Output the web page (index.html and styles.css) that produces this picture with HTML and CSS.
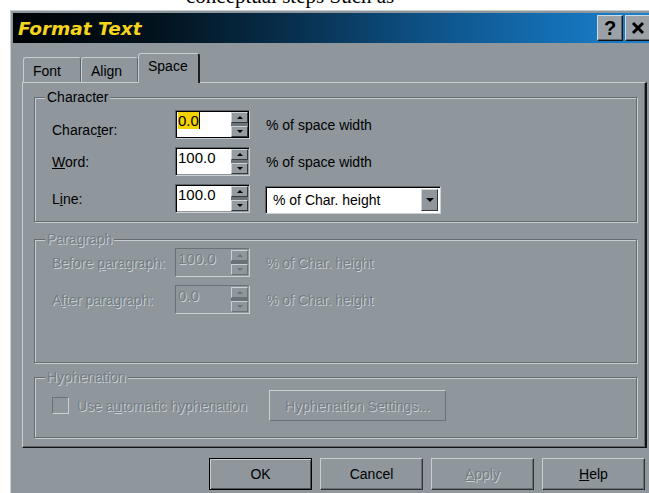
FILE: index.html
```html
<!DOCTYPE html>
<html>
<head>
<meta charset="utf-8">
<title>Format Text</title>
<link rel="stylesheet" href="styles.css">
</head>
<body>
<div class="page-text"><span class="page-line">conceptual steps Such as</span></div>

<div class="window">
  <div class="titlebar">
    <span class="title">Format Text</span>
    <div class="caption-btns">
      <span class="cap-btn">?</span>
      <span class="cap-btn">
        <svg width="14" height="14" viewBox="0 0 14 14"><path d="M2 2 L12 12 M12 2 L2 12" stroke="#000" stroke-width="3" fill="none"/></svg>
      </span>
    </div>
  </div>

  <div class="client">
    <div class="tabs">
      <div class="tab tab-font">Font</div>
      <div class="tab tab-align">Align</div>
      <div class="tab tab-space active">Space</div>
    </div>

    <div class="panel">
      <fieldset class="group group-char">
        <legend>Character</legend>
        <div class="rows">
          <div class="row">
            <label class="lbl lbl-low">Charac<u>t</u>er:</label>
            <div class="spin focus">
              <div class="field"><span class="sel">0.0</span></div>
              <div class="spinner"><span class="sb up"></span><span class="sb down"></span></div>
            </div>
            <span class="unit">% of space width</span>
          </div>
          <div class="row">
            <label class="lbl"><u>W</u>ord:</label>
            <div class="spin">
              <div class="field">100.0</div>
              <div class="spinner"><span class="sb up"></span><span class="sb down"></span></div>
            </div>
            <span class="unit">% of space width</span>
          </div>
          <div class="row">
            <label class="lbl">L<u>i</u>ne:</label>
            <div class="spin">
              <div class="field">100.0</div>
              <div class="spinner"><span class="sb up"></span><span class="sb down"></span></div>
            </div>
            <div class="combo">
              <span class="combo-text">% of Char. height</span>
              <span class="combo-btn"></span>
            </div>
          </div>
        </div>
      </fieldset>

      <fieldset class="group group-para disabled">
        <legend>Paragraph</legend>
        <div class="rows rows-para">
          <div class="row">
            <label class="lbl">Before <u>p</u>aragraph:</label>
            <div class="spin">
              <div class="field">100.0</div>
              <div class="spinner"><span class="sb up"></span><span class="sb down"></span></div>
            </div>
            <span class="unit">% of Char. height</span>
          </div>
          <div class="row">
            <label class="lbl">A<u>f</u>ter paragraph:</label>
            <div class="spin">
              <div class="field">0.0</div>
              <div class="spinner"><span class="sb up"></span><span class="sb down"></span></div>
            </div>
            <span class="unit">% of Char. height</span>
          </div>
        </div>
      </fieldset>

      <fieldset class="group group-hyph disabled">
        <legend>Hyphenation</legend>
        <div class="rows">
          <div class="hyph-row">
            <label class="check-label"><span class="checkbox"></span><span>Use a<u>u</u>tomatic hyphenation</span></label>
            <span class="btn btn-settings">Hyphenation Settings...</span>
          </div>
        </div>
      </fieldset>
    </div>

    <div class="actions">
      <span class="btn btn-default">OK</span>
      <span class="btn">Cancel</span>
      <span class="btn btn-disabled"><u>A</u>pply</span>
      <span class="btn"><u>H</u>elp</span>
    </div>
  </div>
</div>
</body>
</html>
```

FILE: styles.css
```css
* {
  box-sizing: border-box;
}

html,
body {
  margin: 0;
  padding: 0;
  width: 649px;
  height: 493px;
  overflow: hidden;
  background: #ffffff;
}

body {
  font-family: "Liberation Sans", Arial, sans-serif;
  font-size: 14px;
  color: #000;
}

/* document text running above the dialog; only its last line edge shows */
.page-text {
  height: 10px;
  overflow: hidden;
  font-family: "Liberation Serif", "Times New Roman", serif;
  font-size: 21px;
  line-height: 21px;
  padding-left: 186px;
}

.page-line {
  display: block;
  margin-top: -14px;
  white-space: nowrap;
}

/* dialog frame */
.window {
  width: 660px;
  height: 483px;
  margin-left: 10px;
  background: #8f979d;
  border-top: 1px solid #c6ced2;
  border-left: 1px solid #c6ced2;
  padding: 2px 0 0 2px;
}

.titlebar {
  width: 638px;
  height: 30px;
  display: flex;
  align-items: center;
  padding-left: 5px;
  background: linear-gradient(90deg, #000305 0%, #02121d 22%, #083150 45%, #0e5287 65%, #146fb4 85%, #1a82d0 100%);
}

.title {
  font-family: "DejaVu Sans", Verdana, sans-serif;
  font-weight: bold;
  font-style: italic;
  font-size: 18.5px;
  color: #f4d41c;
}

.caption-btns {
  margin-left: auto;
  display: flex;
  gap: 2px;
}

.cap-btn {
  width: 26px;
  height: 26px;
  display: flex;
  align-items: center;
  justify-content: center;
  background: #9aa2a7;
  border: 1px solid;
  border-color: #d2d9dc #111 #111 #d2d9dc;
  box-shadow: inset -1px -1px 0 #5e666b;
  font-family: "Liberation Sans", Arial, sans-serif;
  font-weight: bold;
  font-size: 20px;
  line-height: 1;
}

.client {
  width: 638px;
  padding: 10px 4px 0 9px;
}

/* property-sheet tabs */
.tabs {
  height: 29px;
  display: flex;
  align-items: flex-end;
  padding-left: 1px;
}

.tab {
  height: 25px;
  padding: 4px 0 0 9px;
  border: 1px solid;
  border-bottom: none;
  border-color: #c6ced2 #5e666b transparent #c6ced2;
  border-radius: 3px 3px 0 0;
  line-height: 18px;
}

.tab-font {
  width: 58px;
}

.tab-align {
  width: 57px;
}

.tab-space {
  width: 62px;
}

.tab.active {
  position: relative;
  z-index: 1;
  height: 30px;
  margin-bottom: -1px;
  padding-top: 3px;
  background: #8f979d;
  border-right: 2px solid #1a1e21;
}

.panel {
  height: 366px;
  border-top: 1px solid #c6ced2;
  border-left: 1px solid #c6ced2;
  border-right: 2px solid #111;
  border-bottom: 1px solid #111;
  box-shadow: inset -1px -1px 0 #5e666b;
  padding: 7px 8px 0 11px;
}

/* etched group boxes */
.group {
  margin: 0;
  min-inline-size: 0;
  padding: 0 0 0 10px;
  border: 1px solid #646c71;
  box-shadow: 1px 1px 0 #c6ced2, inset 1px 1px 0 #c6ced2;
}

.group legend {
  padding: 0 2px;
  line-height: 14px;
  height: 14px;
  background: #8f979d;
}

.group-char {
  height: 132px;
}

.group-para {
  height: 131px;
  margin-top: 10px;
}

.group-hyph {
  height: 68px;
  margin-top: 7px;
}

.rows {
  display: flex;
  flex-direction: column;
  gap: 8px;
  padding: 6px 0 0 7px;
}

.rows-para {
  padding-top: 2px;
}

.row {
  display: flex;
  align-items: center;
  height: 29px;
}

.lbl {
  width: 123px;
}

.lbl-low {
  margin-top: 11px;
}

.unit {
  margin-left: 16px;
}

/* spin edit */
.spin {
  width: 75px;
  height: 29px;
  display: flex;
  border: 1px solid;
  border-color: #5d656a #c9d1d5 #c9d1d5 #5d656a;
  box-shadow: inset 1px 1px 0 #000;
  padding: 1px;
}

.spin.focus {
  box-shadow: inset 0 0 0 1px #000;
}

.field {
  flex: 1;
  background: #fff;
  font-size: 15px;
  line-height: 17px;
  padding-left: 1px;
}

.sel {
  display: inline-block;
  background: #f2d200;
  border-right: 1px solid #000;
  line-height: 17px;
}

.spinner {
  width: 17px;
  display: flex;
  flex-direction: column;
  justify-content: space-between;
  background: #6b7378;
}

.sb {
  height: 11px;
  display: flex;
  align-items: center;
  justify-content: center;
  background: #949ca1;
  border: 1px solid;
  border-color: #cdd4d8 #33393d #33393d #cdd4d8;
}

.sb::after {
  content: "";
  border-left: 3px solid transparent;
  border-right: 3px solid transparent;
}

.up::after {
  border-bottom: 3px solid #000;
}

.down::after {
  border-top: 3px solid #000;
}

/* drop-down list */
.combo {
  width: 176px;
  height: 28px;
  margin-left: 15px;
  margin-top: 3px;
  display: flex;
  background: #fff;
  border: 1px solid;
  border-color: #5d656a #c9d1d5 #c9d1d5 #5d656a;
  box-shadow: inset 1px 1px 0 #000;
  padding: 2px 2px 2px 1px;
}

.combo-text {
  flex: 1;
  padding-left: 6px;
  line-height: 22px;
}

.combo-btn {
  width: 17px;
  display: flex;
  align-items: center;
  justify-content: center;
  background: #8f979d;
  border: 1px solid;
  border-color: #cdd4d8 #33393d #33393d #cdd4d8;
}

.combo-btn::after {
  content: "";
  border-left: 4px solid transparent;
  border-right: 4px solid transparent;
  border-top: 4px solid #000;
}

/* greyed-out controls */
.disabled,
.disabled legend {
  color: #757d82;
  text-shadow: 1px 1px 0 #c9d1d5;
}

.disabled .field {
  background: #8f979d;
}

.disabled .spin {
  box-shadow: none;
  border-color: #6a7277 #c9d1d5 #c9d1d5 #6a7277;
}

.disabled .sb {
  background: #8f979d;
  border-color: #c9d1d5 #6a7277 #6a7277 #c9d1d5;
}

.disabled .up::after {
  border-bottom-color: #6a7277;
}

.disabled .down::after {
  border-top-color: #6a7277;
}

.disabled .spinner {
  background: #6a7277;
}

.hyph-row {
  display: flex;
  align-items: center;
  height: 31px;
}

.check-label {
  width: 217px;
  display: flex;
  align-items: center;
  gap: 8px;
}

.checkbox {
  width: 17px;
  height: 17px;
  border: 1px solid;
  border-color: #6a7277 #c9d1d5 #c9d1d5 #6a7277;
}

/* push buttons */
.btn {
  display: flex;
  align-items: center;
  justify-content: center;
  height: 32px;
  width: 103px;
  background: #8f979d;
  border: 1px solid;
  border-color: #c6ced2 #2e3438 #2e3438 #c6ced2;
  box-shadow: inset -1px -1px 0 #687075;
}

.btn-settings {
  width: 177px;
  height: 31px;
  border-color: #c9d1d5 #6a7277 #6a7277 #c9d1d5;
  box-shadow: none;
}

.btn-default {
  border: 1px solid #000;
  box-shadow: inset 1px 1px 0 #c6ced2, inset -1px -1px 0 #4e565b;
}

.btn-disabled {
  color: #757d82;
  text-shadow: 1px 1px 0 #c9d1d5;
}

.actions {
  display: flex;
  justify-content: flex-end;
  gap: 8px;
  margin-top: 10px;
  margin-right: 2px;
}
```
